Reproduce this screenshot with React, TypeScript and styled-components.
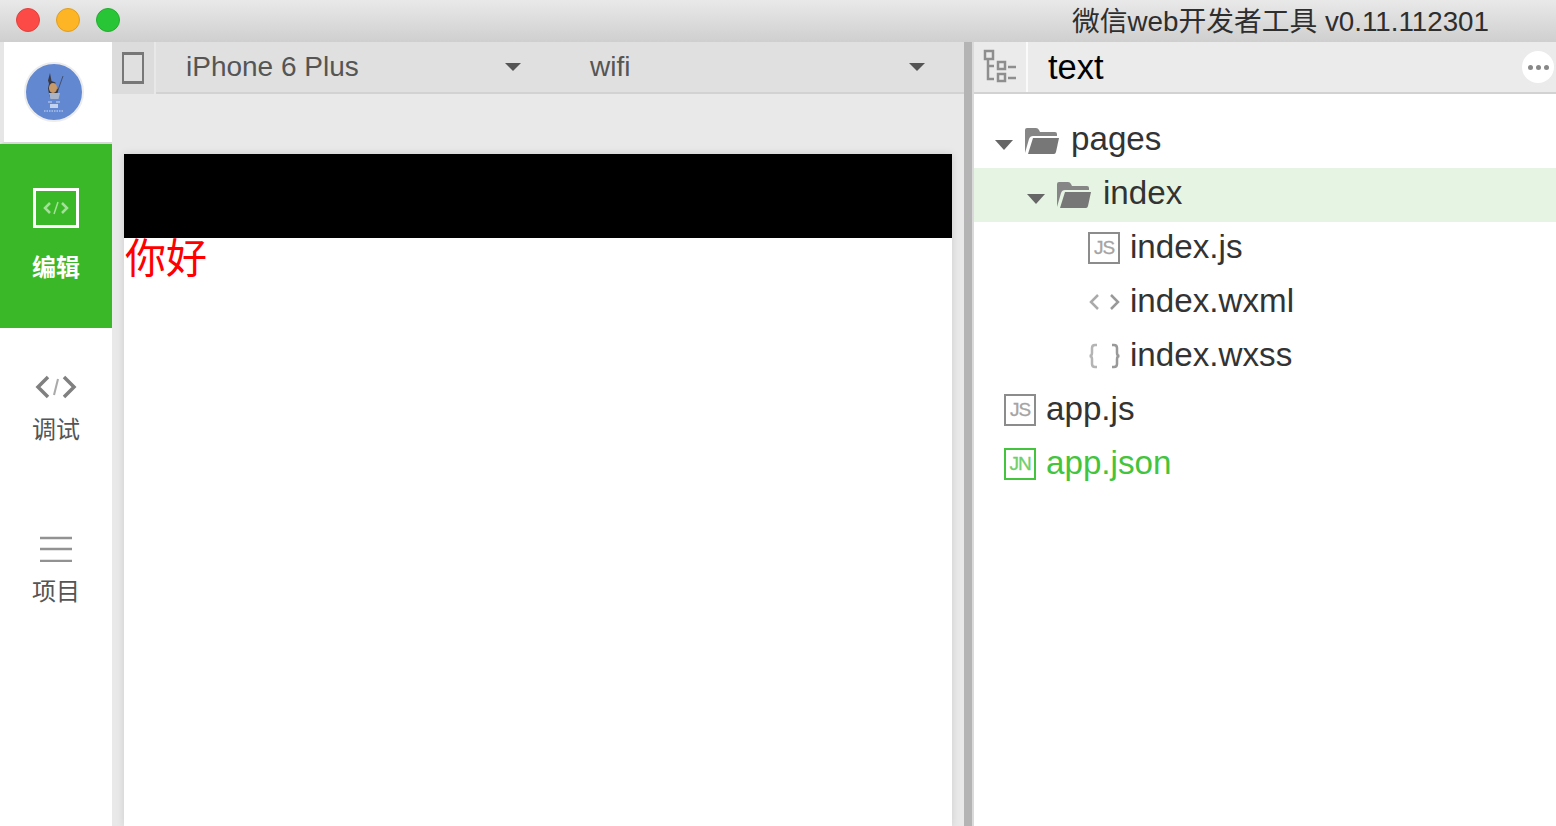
import React from 'react';
import styled, { createGlobalStyle } from 'styled-components';

const GlobalStyle = createGlobalStyle`
  html, body { margin: 0; padding: 0; height: 100%; overflow: hidden; background: #fff; }
  body { font-family: "Liberation Sans", "Noto Sans CJK SC", sans-serif; }
  #root { height: 100%; }
`;

const Window = styled.div`
  display: flex;
  flex-direction: column;
  width: 1556px;
  height: 826px;
  overflow: hidden;
`;

const TitleBar = styled.div`
  flex: 0 0 42px;
  display: flex;
  align-items: center;
  padding: 0 67px 0 16px;
  background: linear-gradient(#e9e9e9, #cfcfcf);
`;

const Lights = styled.div`
  display: flex;
  gap: 16px;
  margin-right: auto;
  margin-top: -2px;
`;

const Light = styled.span<{ $fill: string; $edge: string }>`
  width: 24px;
  height: 24px;
  box-sizing: border-box;
  border-radius: 50%;
  background: ${({ $fill }) => $fill};
  border: 1px solid ${({ $edge }) => $edge};
`;

const Title = styled.div`
  font-size: 27.75px;
  color: #2e2e2e;
  white-space: nowrap;
  margin-top: -4px;
`;

const Body = styled.div`
  flex: 1;
  display: flex;
  min-height: 0;
`;

const Sidebar = styled.nav`
  flex: 0 0 112px;
  display: flex;
  flex-direction: column;
  background: #fff;
`;

const AvatarCell = styled.div`
  flex: 0 0 102px;
  box-sizing: border-box;
  display: flex;
  align-items: center;
  justify-content: center;
  border-left: 4px solid #e6e6e6;
  border-bottom: 2px solid #d8d8d8;
  padding-right: 8px;
`;

const NavItem = styled.div<{ $active?: boolean }>`
  flex: 0 0 ${({ $active }) => ($active ? '184px' : '162px')};
  box-sizing: border-box;
  display: flex;
  flex-direction: column;
  align-items: center;
  padding-top: ${({ $active }) => ($active ? '44px' : '46px')};
  background: ${({ $active }) => ($active ? '#3bb827' : 'transparent')};
  color: ${({ $active }) => ($active ? '#fff' : '#555')};
`;

const NavIcon = styled.div<{ $active?: boolean }>`
  height: ${({ $active }) => ($active ? '40px' : '26px')};
  display: flex;
  align-items: center;
  justify-content: center;
`;

const NavLabel = styled.div<{ $active?: boolean }>`
  margin-top: ${({ $active }) => ($active ? '24px' : '14px')};
  font-size: 24px;
  line-height: 32px;
  font-weight: ${({ $active }) => ($active ? 700 : 400)};
`;

const Main = styled.main`
  flex: 0 0 852px;
  display: flex;
  flex-direction: column;
  min-width: 0;
`;

const Toolbar = styled.div`
  flex: 0 0 52px;
  display: flex;
  background: #e0e0e0;
  border-bottom: 2px solid #d2d2d2;
  box-sizing: border-box;
`;

const DeviceButton = styled.div`
  flex: 0 0 42px;
  display: flex;
  align-items: center;
  justify-content: center;
  background: #dcdcdc;
  border-right: 2px solid #e8e8e8;
  margin-bottom: -2px;
  height: 52px;
`;

const DeviceFrame = styled.div`
  width: 22px;
  height: 32px;
  box-sizing: border-box;
  background: #e0e0e0;
  border: 2px solid #777;
  border-top-width: 3px;
  border-bottom-width: 3px;
`;

const Selects = styled.div`
  display: flex;
  gap: 69px;
  padding-left: 30px;
`;

const Select = styled.div`
  width: 335px;
  display: flex;
  align-items: center;
  justify-content: space-between;
  font-size: 28px;
  color: #555;
`;

const Caret = styled.span`
  width: 0;
  height: 0;
  border-left: 8px solid transparent;
  border-right: 8px solid transparent;
  border-top: 8px solid #555;
`;

const Preview = styled.div`
  flex: 1;
  display: flex;
  flex-direction: column;
  padding: 60px 12px 0;
  background: #e9e9e9;
  min-height: 0;
`;

const Phone = styled.div`
  flex: 1;
  background: #fff;
  box-shadow: 0 0 8px rgba(0, 0, 0, 0.12);
`;

const NavigationBar = styled.div`
  height: 84px;
  background: #000;
`;

const Hello = styled.div`
  font-size: 41px;
  line-height: 42px;
  padding-left: 1px;
  color: #f00;
`;

const Splitter = styled.div`
  flex: 0 0 8px;
  background: #b4b4b4;
  border-right: 2px solid #dadada;
`;

const Panel = styled.aside`
  flex: 1;
  display: flex;
  flex-direction: column;
  min-width: 0;
`;

const PanelHeader = styled.div`
  flex: 0 0 52px;
  box-sizing: border-box;
  display: flex;
  align-items: center;
  background: #ebebeb;
  border-bottom: 2px solid #d2d2d2;
`;

const OutlineCell = styled.div`
  flex: 0 0 54px;
  box-sizing: border-box;
  align-self: stretch;
  display: flex;
  align-items: center;
  justify-content: center;
  border-right: 2px solid #fafafa;
`;

const FileTab = styled.div`
  flex: 1;
  padding-left: 20px;
  font-size: 34.5px;
  color: #000;
`;

const MoreButton = styled.div`
  width: 32px;
  height: 32px;
  margin-right: 2px;
  border-radius: 50%;
  background: #fff;
  display: flex;
  align-items: center;
  justify-content: center;
  gap: 3px;
`;

const Dot = styled.span`
  width: 5px;
  height: 5px;
  border-radius: 50%;
  background: #888;
`;

const Tree = styled.div`
  padding-top: 20px;
`;

const Row = styled.div<{ $depth: number; $selected?: boolean; $green?: boolean }>`
  height: 54px;
  display: flex;
  align-items: center;
  padding-left: ${({ $depth }) => $depth}px;
  background: ${({ $selected }) => ($selected ? '#e6f5e3' : 'transparent')};
  color: ${({ $green }) => ($green ? '#44c43c' : '#333')};
  font-size: 33.2px;
`;

const Name = styled.span`
  padding-bottom: 4px;
`;

const Arrow = styled.span`
  width: 0;
  height: 0;
  margin: 8px 11px 0 0;
  border-left: 9.5px solid transparent;
  border-right: 9.5px solid transparent;
  border-top: 10px solid #666;
`;

const FolderSlot = styled.span`
  display: flex;
  margin-right: 11px;
`;

const FileSlot = styled.span`
  display: flex;
  width: 32px;
  margin: -2px 10px 0 0;
  justify-content: center;
`;

const Badge = styled.span<{ $green?: boolean }>`
  width: 32px;
  height: 32px;
  box-sizing: border-box;
  display: flex;
  align-items: center;
  justify-content: center;
  border: 2px solid ${({ $green }) => ($green ? '#44c43c' : '#8c8c8c')};
  color: ${({ $green }) => ($green ? '#6fd068' : '#a4a4a4')};
  font-size: 19px;
  letter-spacing: -1px;
  -webkit-text-stroke: 0.3px currentColor;
`;

const Avatar = () => (
  <svg width="60" height="60" viewBox="0 0 60 60">
    <circle cx="30" cy="30" r="29" fill="#6288d2" stroke="#ececec" strokeWidth="2" />
    <path d="M26 11l1.500 8 4 1.500-1 5 4 2-2 7h-7l-1.500-8 1-5-1-3z" fill="#3a3a42" />
    <ellipse cx="29" cy="26" rx="4" ry="5" fill="#c89a68" />
    <path d="M25 31h11l-1.500 6h-8z" fill="#a9b4c8" />
    <path d="M34 28l5-14" stroke="#44506c" strokeWidth="1" />
    <path d="M24 40h4M32 40h4" stroke="#c8d4ee" strokeWidth="1" />
    <path d="M26 43h8M26 45h8" stroke="#e4eaf8" strokeWidth="1.500" />
    <path d="M20 49h20" stroke="#d4dff4" strokeWidth="1" strokeDasharray="1.500 1" />
  </svg>
);

const EditIcon = () => (
  <svg width="46" height="40" viewBox="0 0 46 40" fill="none">
    <rect x="1.500" y="1.500" width="43" height="37" stroke="#fff" strokeWidth="3" />
    <path d="M17 15l-5 5 5 5M29 15l5 5-5 5" stroke="#a4e09a" strokeWidth="2.500" />
    <path d="M25 14l-4 12" stroke="#a4e09a" strokeWidth="1.500" />
  </svg>
);

const CodeIcon = () => (
  <svg width="42" height="26" viewBox="0 0 42 26" fill="none" stroke="#808080">
    <path d="M13 3L3 13l10 10M29 3l10 10-10 10" strokeWidth="3.500" />
    <path d="M23 5l-4 16" strokeWidth="2" stroke="#aaa" />
  </svg>
);

const MenuIcon = () => (
  <svg width="32" height="26" viewBox="0 0 32 26" stroke="#929292" strokeWidth="2.500">
    <path d="M0 2h32M0 13h32M0 25h32" />
  </svg>
);

const OutlineIcon = () => (
  <svg width="34" height="36" viewBox="0 0 34 36" fill="none" stroke="#8e8e8e" strokeWidth="2.500">
    <rect x="2" y="2" width="8" height="8" />
    <path d="M5 10v20h6M5 17h6" />
    <rect x="15" y="13" width="7" height="7" />
    <rect x="15" y="25" width="7" height="7" />
    <path d="M25 18h8M25 29h8" />
  </svg>
);

const FolderIcon = () => (
  <svg width="36" height="28" viewBox="0 0 36 28" fill="#777">
    <path d="M1 26V3q0-2 2-2h9q2 0 3 2l1 2h15q2 0 2 2v2H9q-3 0-4 3L1 26z" fill="#868686" />
    <path d="M9 11h26l-3 14q-.500 2-2 2H4z" />
  </svg>
);

const AngleIcon = () => (
  <svg width="32" height="24" viewBox="0 0 32 24" fill="none" strokeWidth="2.500">
    <path d="M10 5l-7 7 7 7" stroke="#aaa" />
    <path d="M23 5l7 7-7 7" stroke="#999" />
  </svg>
);

const BraceIcon = () => (
  <svg width="32" height="26" viewBox="0 0 32 26" fill="none" strokeWidth="2.500">
    <path d="M9 2H7Q4 2 4 5v5q0 3-2.500 3Q4 13 4 16v5q0 3 3 3h2" stroke="#b4b4b4" />
    <path d="M24 2h2q3 0 3 3v5q0 3 2.500 3-2.500 0-2.500 3v5q0 3-3 3h-2" stroke="#999" />
  </svg>
);

const App = () => (
  <Window>
    <GlobalStyle />
    <TitleBar>
      <Lights>
        <Light $fill="#fc4a46" $edge="#e2403c" />
        <Light $fill="#fdb526" $edge="#e09e20" />
        <Light $fill="#28c536" $edge="#22ad2e" />
      </Lights>
      <Title>微信web开发者工具 v0.11.112301</Title>
    </TitleBar>
    <Body>
      <Sidebar>
        <AvatarCell>
          <Avatar />
        </AvatarCell>
        <NavItem $active>
          <NavIcon $active>
            <EditIcon />
          </NavIcon>
          <NavLabel $active>编辑</NavLabel>
        </NavItem>
        <NavItem>
          <NavIcon>
            <CodeIcon />
          </NavIcon>
          <NavLabel>调试</NavLabel>
        </NavItem>
        <NavItem>
          <NavIcon>
            <MenuIcon />
          </NavIcon>
          <NavLabel>项目</NavLabel>
        </NavItem>
      </Sidebar>
      <Main>
        <Toolbar>
          <DeviceButton>
            <DeviceFrame />
          </DeviceButton>
          <Selects>
            <Select>
              iPhone 6 Plus
              <Caret />
            </Select>
            <Select>
              wifi
              <Caret />
            </Select>
          </Selects>
        </Toolbar>
        <Preview>
          <Phone>
            <NavigationBar />
            <Hello>你好</Hello>
          </Phone>
        </Preview>
      </Main>
      <Splitter />
      <Panel>
        <PanelHeader>
          <OutlineCell>
            <OutlineIcon />
          </OutlineCell>
          <FileTab>text</FileTab>
          <MoreButton>
            <Dot />
            <Dot />
            <Dot />
          </MoreButton>
        </PanelHeader>
        <Tree>
          <Row $depth={21}>
            <Arrow />
            <FolderSlot>
              <FolderIcon />
            </FolderSlot>
            <Name>pages</Name>
          </Row>
          <Row $depth={53} $selected>
            <Arrow />
            <FolderSlot>
              <FolderIcon />
            </FolderSlot>
            <Name>index</Name>
          </Row>
          <Row $depth={114}>
            <FileSlot>
              <Badge>JS</Badge>
            </FileSlot>
            <Name>index.js</Name>
          </Row>
          <Row $depth={114}>
            <FileSlot>
              <AngleIcon />
            </FileSlot>
            <Name>index.wxml</Name>
          </Row>
          <Row $depth={114}>
            <FileSlot>
              <BraceIcon />
            </FileSlot>
            <Name>index.wxss</Name>
          </Row>
          <Row $depth={30}>
            <FileSlot>
              <Badge>JS</Badge>
            </FileSlot>
            <Name>app.js</Name>
          </Row>
          <Row $depth={30} $green>
            <FileSlot>
              <Badge $green>JN</Badge>
            </FileSlot>
            <Name>app.json</Name>
          </Row>
        </Tree>
      </Panel>
    </Body>
  </Window>
);

export default App;
